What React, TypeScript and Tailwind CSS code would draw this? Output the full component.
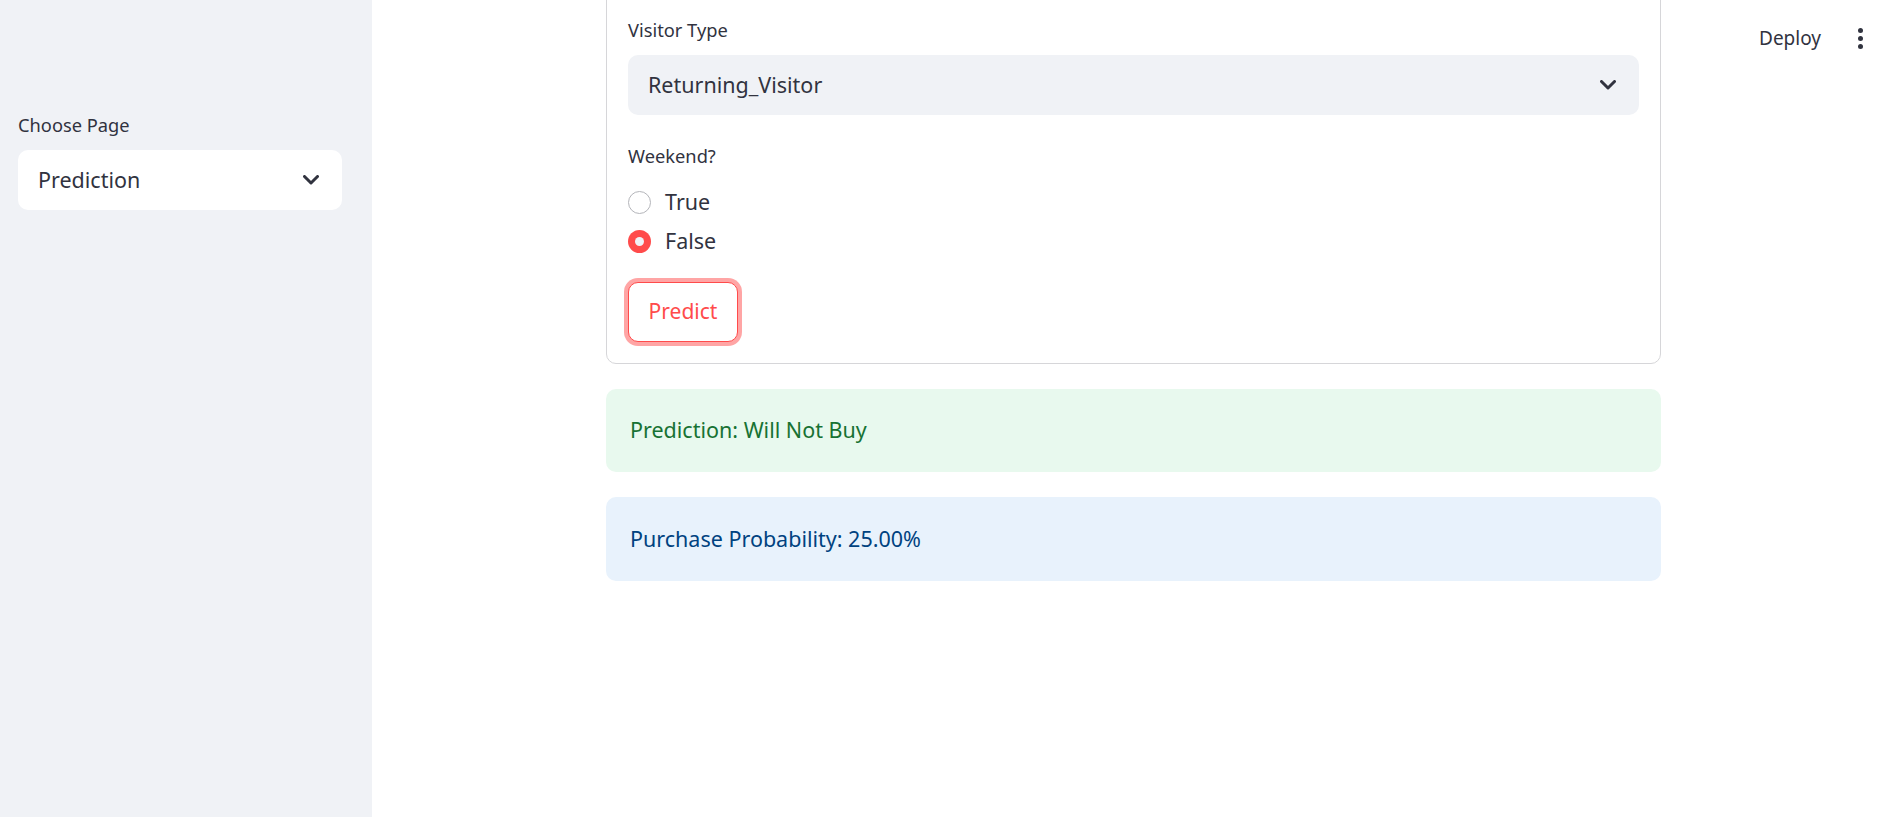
import React from 'react';

function Chevron() {
  return (
    <svg width="16" height="10" viewBox="0 0 16 10" fill="none" className="shrink-0">
      <path d="M1.5 1.5l6.5 6.5 6.5-6.5" stroke="#31333f" strokeWidth="3" strokeLinecap="round" strokeLinejoin="round" />
    </svg>
  );
}

function Select({ value, light }: { value: string; light?: boolean }) {
  return (
    <div
      className={`flex h-[60px] items-center justify-between rounded-[10px] pl-[20px] pr-[23px] ${
        light ? 'bg-white' : 'bg-[#f0f2f6]'
      }`}
    >
      <span className="text-[21.5px]">{value}</span>
      <Chevron />
    </div>
  );
}

function Radio({ label, checked }: { label: string; checked?: boolean }) {
  return (
    <div className="flex h-[32px] items-center gap-[14px]">
      {checked ? (
        <span className="flex h-[23px] w-[23px] items-center justify-center rounded-full bg-[#ff4b4b]">
          <span className="h-[9px] w-[9px] rounded-full bg-[#f0f2f6]" />
        </span>
      ) : (
        <span className="h-[23px] w-[23px] rounded-full border-[1.5px] border-[#b4b5ba] bg-white" />
      )}
      <span className="text-[21.5px]">{label}</span>
    </div>
  );
}

export default function App() {
  return (
    <div className="flex h-screen w-full overflow-hidden bg-white font-['Noto_Sans',sans-serif] text-[#31333f]">
      <aside className="w-[372px] shrink-0 bg-[#f0f2f6] pl-[18px] pr-[30px] pt-[111px]">
        <div className="h-[28px] text-[18.3px] leading-[28px]">Choose Page</div>
        <div className="mt-[11px]">
          <Select value="Prediction" light />
        </div>
      </aside>

      <main className="relative flex-1">
        <div className="absolute right-[28px] top-[24px] flex items-center gap-[37px]">
          <span className="text-[19px]">Deploy</span>
          <span className="flex flex-col items-center gap-[3px]">
            <span className="h-[5px] w-[5px] rounded-full bg-[#31333f]" />
            <span className="h-[5px] w-[5px] rounded-full bg-[#31333f]" />
            <span className="h-[5px] w-[5px] rounded-full bg-[#31333f]" />
          </span>
        </div>

        <div className="ml-[234px] w-[1055px]">
          <div className="-mt-[22px] rounded-[10px] border border-[#d6d6d9] px-[21px] pb-[21px] pt-[37px]">
            <div className="h-[28px] text-[18.3px] leading-[28px]">Visitor Type</div>
            <div className="mt-[11px]">
              <Select value="Returning_Visitor" />
            </div>

            <div className="mt-[27px] h-[28px] text-[18.3px] leading-[28px]">Weekend?</div>
            <div className="mt-[16px] flex flex-col gap-[7px]">
              <Radio label="True" />
              <Radio label="False" checked />
            </div>

            <button className="mt-[25px] h-[60px] w-[110px] rounded-[10px] border border-[#ff4b4b] bg-white text-[21px] text-[#ff4b4b] shadow-[0_0_0_4px_rgba(255,75,75,0.5)]">
              Predict
            </button>
          </div>

          <div className="mt-[25px] flex h-[83px] items-center rounded-[10px] bg-[#e8f9ee] px-[24px] text-[21.5px] text-[#177233]">
            Prediction: Will Not Buy
          </div>
          <div className="mt-[25px] flex h-[84px] items-center rounded-[10px] bg-[#e8f2fc] px-[24px] text-[21.5px] text-[#004280]">
            Purchase Probability: 25.00%
          </div>
        </div>
      </main>
    </div>
  );
}
